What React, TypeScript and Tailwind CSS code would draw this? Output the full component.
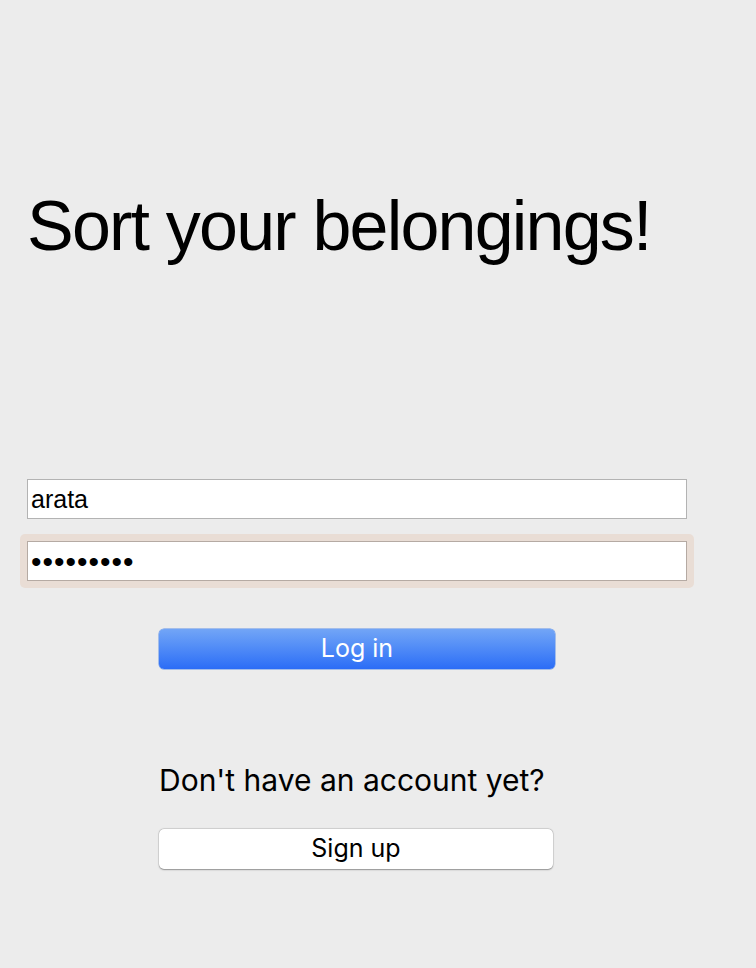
import { useState } from 'react';

function App() {
  const [user, setUser] = useState('arata');
  const [pass, setPass] = useState('123456789');

  return (
    <div className="min-h-screen w-full bg-[#ececec] font-['Inter','Liberation_Sans',sans-serif] text-black">
      <div className="pl-[27px] pt-[191px]">
        {/* Title */}
        <h1 className="font-['Liberation_Sans',Arial,sans-serif] text-[70px] leading-none font-normal tracking-[-1.8px] whitespace-nowrap">
          Sort your belongings!
        </h1>

        {/* Form */}
        <div className="w-[660px] mt-[218px] flex flex-col">
          <input
            value={user}
            onChange={e => setUser(e.target.value)}
            className="h-10 w-full bg-white border border-[#b3b3b3] px-[3px] font-['Liberation_Sans',Arial,sans-serif] text-[25px] outline-none"
          />
          <div className="mt-[15px] -mx-[7px] p-[7px] rounded-[5px] bg-[#e9ddd5]">
            <input
              type="password"
              value={pass}
              onChange={e => setPass(e.target.value)}
              className="h-10 w-full bg-white border border-[#b5aaa3] px-[3px] font-['Liberation_Sans',Arial,sans-serif] text-[30px] tracking-[1px] outline-none"
            />
          </div>

          <div className="flex flex-col items-center">
            <button className="mt-[41px] h-10 w-[396px] rounded-[5px] bg-gradient-to-b from-[#72a5f6] to-[#2b6cf6] text-white text-[25px] shadow-[0_0_0_0.5px_#5a8de8]">
              Log in
            </button>

            <div className="w-[396px] mt-[96px]">
              <p className="text-[30px] leading-none whitespace-nowrap">Don't have an account yet?</p>
              <button className="mt-[34px] h-10 w-[394px] rounded-[5px] bg-white text-[25px] shadow-[0_0.5px_1.5px_rgba(0,0,0,0.35),0_0_0_0.5px_rgba(0,0,0,0.12)]">
                Sign up
              </button>
            </div>
          </div>
        </div>
      </div>
    </div>
  );
}

export default App;
